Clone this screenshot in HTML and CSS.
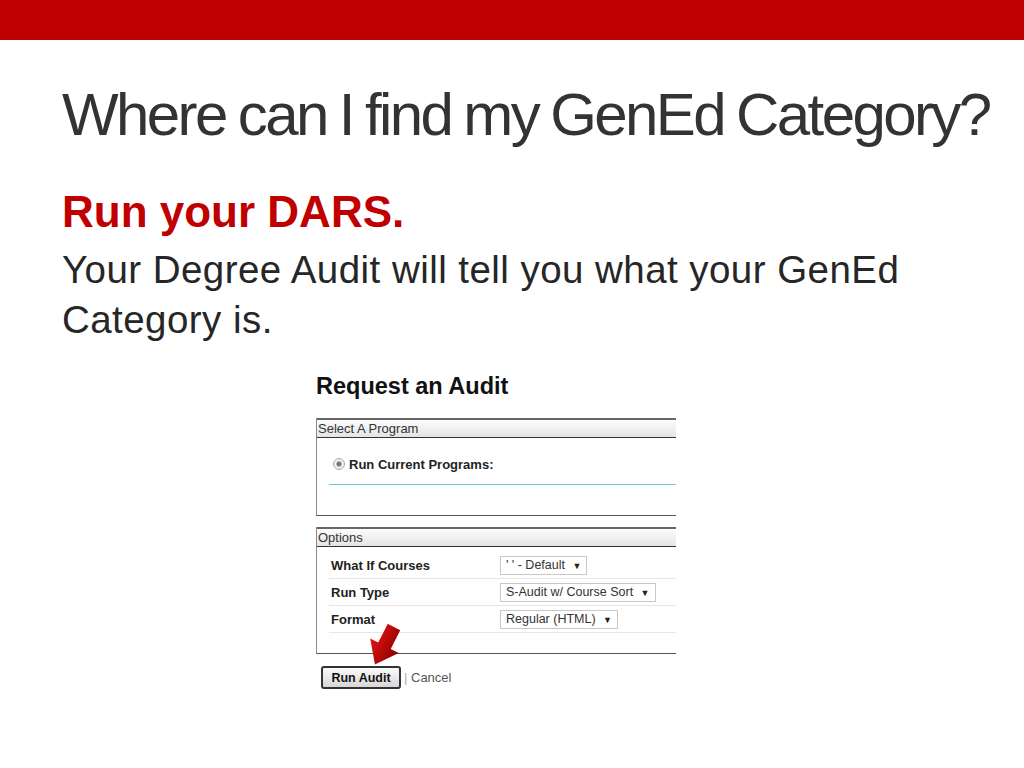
FILE: index.html
```html
<!DOCTYPE html>
<html lang="en">
<head>
<meta charset="UTF-8">
<meta name="viewport" content="width=device-width, initial-scale=1.0">
<title>Where can I find my GenEd Category?</title>
<link rel="stylesheet" href="styles.css">
</head>
<body>

<div class="topbar"></div>

<div class="slide">
  <h1>Where can I find my GenEd Category?</h1>
  <h2>Run your DARS.</h2>
  <p class="lead">Your Degree Audit will tell you what your GenEd Category is.</p>

  <div class="audit">
    <h3>Request an Audit</h3>

    <div class="panel">
      <div class="panel-head">Select A Program</div>
      <div class="prog-body">
        <div class="prog-row">
          <span class="radio"></span>
          <span class="prog-label">Run Current Programs:</span>
        </div>
      </div>
    </div>

    <div class="panel options">
      <div class="panel-head">Options</div>
      <div class="opt-body">
        <div class="opt-row">
          <span class="opt-label">What If Courses</span>
          <span class="select">' ' - Default <span class="caret">&#9660;</span></span>
        </div>
        <div class="opt-row">
          <span class="opt-label">Run Type</span>
          <span class="select">S-Audit w/ Course Sort <span class="caret">&#9660;</span></span>
        </div>
        <div class="opt-row">
          <span class="opt-label">Format</span>
          <span class="select">Regular (HTML) <span class="caret">&#9660;</span></span>
        </div>
      </div>
    </div>

    <div class="actions">
      <button class="run-btn">Run Audit</button>
      <span class="cancel"><span class="pipe">|</span> Cancel</span>

      <svg class="arrow" width="44" height="50" viewBox="0 0 44 50">
        <defs>
          <linearGradient id="arrowFill" x1="0" y1="0" x2="1" y2="0">
            <stop offset="0" stop-color="#e41212"/>
            <stop offset="1" stop-color="#8a0000"/>
          </linearGradient>
        </defs>
        <g transform="translate(24 3) rotate(27)">
          <path d="M-7 0 L7 0 L7 21 L16 21 L0 42 L-16 21 L-7 21 Z" fill="url(#arrowFill)"/>
        </g>
      </svg>
    </div>
  </div>
</div>

</body>
</html>
```

FILE: styles.css
```css
body {
  margin: 0;
  background: #fff;
  font-family: "Liberation Sans", Arial, sans-serif;
  color: #333;
}

.topbar {
  height: 40px;
  background-color: #c00000;
}

.slide {
  padding-left: 62px;
}

h1 {
  margin: 45px 0 0;
  font-size: 60px;
  font-weight: normal;
  line-height: 60px;
  letter-spacing: -2.6px;
  word-spacing: -2px;
  color: #333;
  white-space: nowrap;
}

h2 {
  margin: 45px 0 0;
  font-size: 44px;
  line-height: 44px;
  color: #c00000;
}

.lead {
  margin: 11px 0 0;
  width: 900px;
  font-size: 38.5px;
  line-height: 50px;
  letter-spacing: 0.45px;
  color: #262626;
}

/* screenshot of the audit form */
.audit {
  margin: 27px 0 0 254px;
  width: 360px;
  position: relative;
}

.audit h3 {
  margin: 0;
  font-size: 23.5px;
  line-height: 28px;
  color: #111;
}

.panel {
  margin-top: 18px;
  border-left: 1px solid #8a8a8a;
  border-bottom: 1px solid #555;
  overflow: hidden;
}

.panel.options {
  margin-top: 11px;
}

.panel-head {
  height: 17px;
  border-top: 2px solid #666;
  border-bottom: 1px solid #333;
  background: linear-gradient(#fdfdfd, #e4e4e4);
  font-size: 13px;
  line-height: 17px;
  color: #333;
  padding-left: 1px;
}

.prog-body {
  padding: 16px 0 30px 12px;
}

.prog-row {
  display: flex;
  align-items: center;
  height: 20px;
  padding: 0 0 10px 4px;
  border-bottom: 1px solid #6fc8dc;
}

.radio {
  width: 10px;
  height: 10px;
  border: 1px solid #aaa;
  border-radius: 50%;
  background: radial-gradient(circle, #777 0, #777 2px, #e8e8e8 3px, #f6f6f6 5px);
  margin-right: 4px;
}

.prog-label,
.opt-label {
  font-size: 13px;
  font-weight: bold;
  color: #222;
}

.opt-body {
  padding: 5px 0 20px 12px;
}

.opt-row {
  display: flex;
  align-items: center;
  height: 26px;
  border-bottom: 1px solid #e6e6e6;
}

.opt-label {
  width: 169px;
  padding-left: 2px;
}

.select {
  height: 17px;
  padding: 0 5px;
  border: 1px solid #c8c8c8;
  font-size: 12.5px;
  line-height: 17px;
  color: #333;
  white-space: nowrap;
}

.caret {
  font-size: 9px;
  margin-left: 4px;
  color: #222;
}

.actions {
  position: relative;
  display: flex;
  align-items: center;
  margin-top: 12px;
  padding-left: 5px;
}

.run-btn {
  width: 80px;
  height: 23px;
  border: 2px solid #333;
  border-radius: 3px;
  background: linear-gradient(#fafafa, #d6d6d6);
  font-family: "Liberation Sans", Arial, sans-serif;
  font-size: 12.5px;
  font-weight: bold;
  color: #111;
  padding: 0;
}

.cancel {
  margin-left: 3px;
  font-size: 13px;
  color: #555;
}

.pipe {
  color: #aaa;
}

.arrow {
  position: absolute;
  left: 54px;
  top: -42px;
}
```
